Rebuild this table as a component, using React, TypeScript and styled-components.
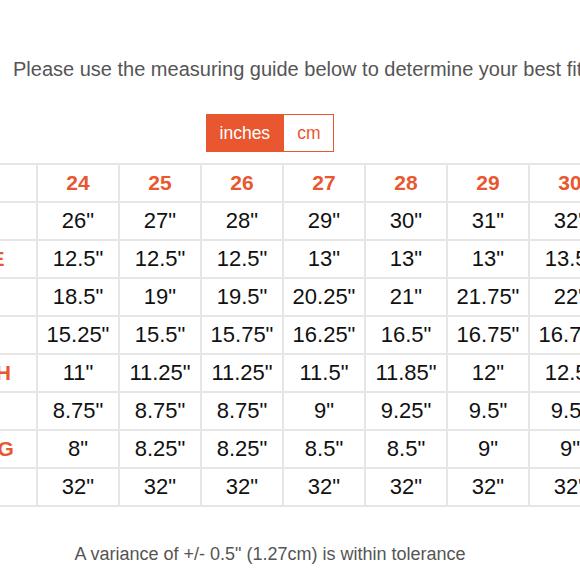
import styled, { createGlobalStyle } from 'styled-components';

const GlobalStyle = createGlobalStyle`
  html, body {
    margin: 0;
    padding: 0;
    background: #fff;
  }
  body {
    font-family: "Liberation Sans", Arial, sans-serif;
    overflow: hidden;
  }
`;

const ORANGE = '#e8572f';
const LINE = '#e6e6e6';

const Page = styled.div`
  width: 580px;
  height: 580px;
  overflow: hidden;
  display: flex;
  flex-direction: column;
`;

const Intro = styled.p`
  margin: 57px 0 0;
  padding-left: 13px;
  font-size: 20px;
  line-height: 24px;
  color: #555;
  white-space: nowrap;
`;

const Centered = styled.div`
  width: 540px;
  display: flex;
  justify-content: center;
`;

const UnitSwitch = styled.div`
  display: flex;
  margin-top: 33px;
`;

const UnitButton = styled.button<{ $active?: boolean }>`
  box-sizing: border-box;
  height: 38px;
  padding: 0 13px;
  border: 1px solid ${ORANGE};
  background: ${(p) => (p.$active ? ORANGE : '#fff')};
  color: ${(p) => (p.$active ? '#fff' : ORANGE)};
  font-family: "Liberation Sans", Arial, sans-serif;
  font-size: 17.5px;
  cursor: pointer;
  & + & {
    border-left: none;
  }
`;

const Chart = styled.div`
  margin: 11px 0 0 -154px;
  display: grid;
  grid-template-columns: 192px repeat(7, 82px);
  grid-auto-rows: 38px;
  border-top: 2px solid ${LINE};
  width: max-content;
`;

const Cell = styled.div<{ $kind?: 'head' | 'label' | 'value' }>`
  box-sizing: border-box;
  display: flex;
  align-items: center;
  justify-content: center;
  border-right: 2px solid ${LINE};
  border-bottom: 2px solid ${LINE};
  white-space: nowrap;
  font-size: ${(p) => (p.$kind === 'value' ? '22px' : '21px')};
  font-weight: ${(p) => (p.$kind === 'value' ? 'normal' : 'bold')};
  color: ${(p) => (p.$kind === 'value' ? '#111' : ORANGE)};
`;

const Note = styled.p`
  margin: 36px 0 0;
  font-size: 18px;
  line-height: 22px;
  color: #555;
  white-space: nowrap;
`;

const sizes = ['24', '25', '26', '27', '28', '29', '30'];

const rows: { label: string; values: string[] }[] = [
  { label: 'WAIST', values: ['26"', '27"', '28"', '29"', '30"', '31"', '32"'] },
  { label: 'FRONT RISE', values: ['12.5"', '12.5"', '12.5"', '13"', '13"', '13"', '13.5"'] },
  { label: 'HIP', values: ['18.5"', '19"', '19.5"', '20.25"', '21"', '21.75"', '22"'] },
  { label: 'BACK RISE', values: ['15.25"', '15.5"', '15.75"', '16.25"', '16.5"', '16.75"', '16.75"'] },
  { label: 'THIGH WIDTH', values: ['11"', '11.25"', '11.25"', '11.5"', '11.85"', '12"', '12.5"'] },
  { label: 'KNEE', values: ['8.75"', '8.75"', '8.75"', '9"', '9.25"', '9.5"', '9.5"'] },
  { label: 'LEG OPENING', values: ['8"', '8.25"', '8.25"', '8.5"', '8.5"', '9"', '9"'] },
  { label: 'INSEAM', values: ['32"', '32"', '32"', '32"', '32"', '32"', '32"'] },
];

export default function App() {
  return (
    <Page>
      <GlobalStyle />
      <Intro>Please use the measuring guide below to determine your best fit</Intro>
      <Centered>
        <UnitSwitch>
          <UnitButton $active>inches</UnitButton>
          <UnitButton>cm</UnitButton>
        </UnitSwitch>
      </Centered>
      <Chart>
        <Cell $kind="label" />
        {sizes.map((s) => (
          <Cell key={s} $kind="head">
            {s}
          </Cell>
        ))}
        {rows.map((row) => [
          <Cell key={row.label} $kind="label">
            {row.label}
          </Cell>,
          ...row.values.map((v, i) => (
            <Cell key={row.label + i} $kind="value">
              {v}
            </Cell>
          )),
        ])}
      </Chart>
      <Centered>
        <Note>A variance of +/- 0.5" (1.27cm) is within tolerance</Note>
      </Centered>
    </Page>
  );
}
